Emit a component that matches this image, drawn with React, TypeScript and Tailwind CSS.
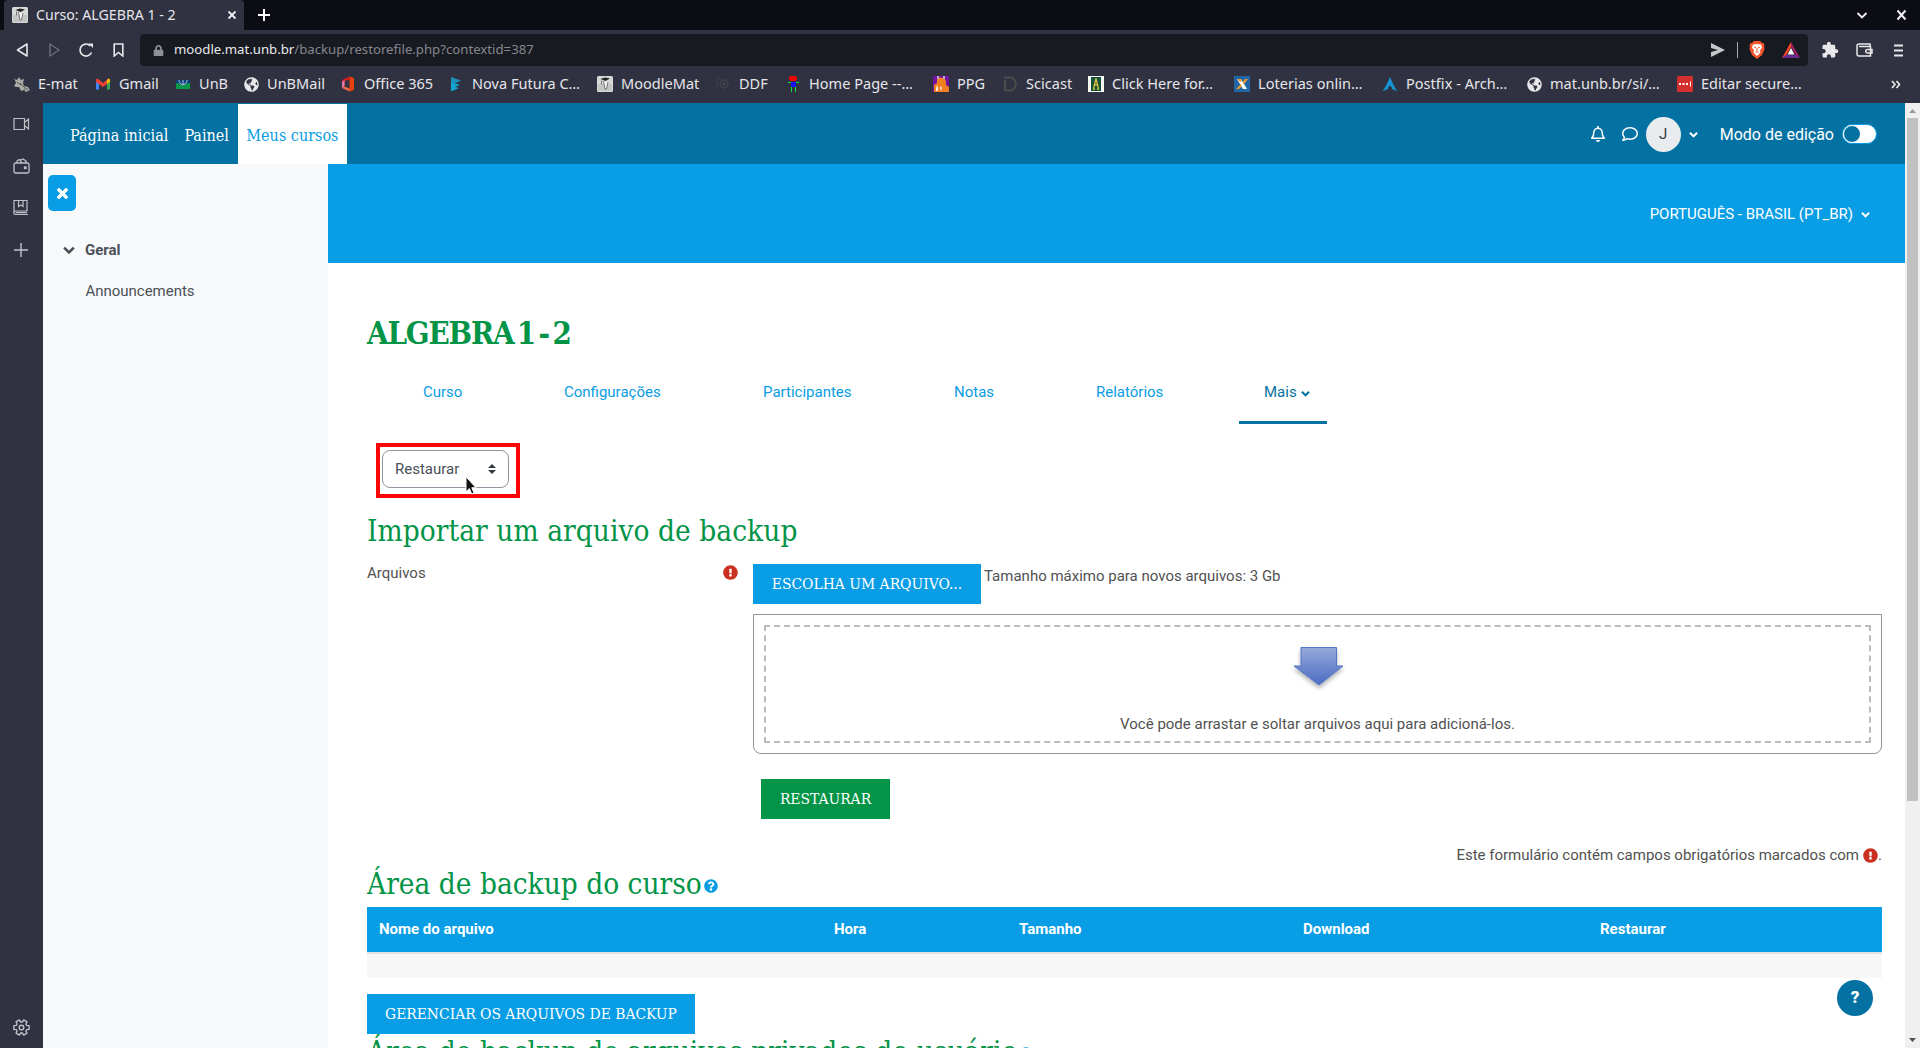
import type { ReactNode } from "react";
import { FaTimes, FaRegBell, FaRegComment, FaExclamationCircle, FaQuestionCircle, FaGlobeAmericas, FaLock } from "react-icons/fa";
import { MdExtension } from "react-icons/md";

function Chevron({ size, className }: { size: number; className?: string }) {
  return (
    <svg className={className} width={size} height={size} viewBox="0 0 10 10" fill="none" stroke="currentColor" strokeWidth="2.200">
      <path d="M1 3l4 4 4-4" />
    </svg>
  );
}

function MoodleIcon() {
  return (
    <svg width="16" height="16" viewBox="0 0 16 16">
      <rect width="16" height="16" rx="1.5" fill="#d8d8d8" />
      <rect x="1" y="8" width="14" height="7" fill="#c4c4c4" />
      <path d="M3.500 3 8 1.500l5 1-4.500 2.500z" fill="#222" />
      <path d="M4.500 4.500v4M6.500 5l1.500 8h1.500l1.500-7" fill="#f4f4f4" stroke="#6a6a6a" strokeWidth=".9" />
    </svg>
  );
}

function GlobeIcon() {
  return <FaGlobeAmericas size={15} color="#e8e8ea" />;
}

const box = "0 0 16 16";

const bookmarks: { label: string; width: string; icon: ReactNode }[] = [
  {
    label: "E-mat", width: "w-[81px]",
    icon: (
      <svg width="16" height="16" viewBox={box}>
        <path d="M0 2l2 2 2-1 1-2 2 3 3-1-1 4 1 3 4 1 2 3-4 2-2-2-3 1-2-4-3 0-2-1 2-3z" fill="#aaa9a4" />
        <path d="M6 7l5 5M3 6l4 3M10 13l4 0" stroke="#5c5a56" strokeWidth="1" fill="none" />
      </svg>
    ),
  },
  {
    label: "Gmail", width: "w-[80px]",
    icon: (
      <svg width="16" height="16" viewBox={box}>
        <path d="M1 5v8.500h3V7z" fill="#4285f4" />
        <path d="M15 5v8.500h-3V7z" fill="#34a853" />
        <path d="M1 3.500 2.500 2.500 8 7l5.500-4.500L15 3.500V6l-7 5-7-5z" fill="#ea4335" />
        <path d="M12 4l1.500-1.500L15 3.500V6l-3 2z" fill="#fbbc04" />
      </svg>
    ),
  },
  {
    label: "UnB", width: "w-[68px]",
    icon: (
      <svg width="16" height="16" viewBox={box}>
        <path d="M1 4h14v3l-7 3-7-3z" fill="#0b3f7e" />
        <path d="M1 7c2 0 5 1 7 3 2-2 5-3 7-3v6H1z" fill="#0a9a4a" />
        <path d="M8 4v5M4 4c0 2 1 4 4 5 3-1 4-3 4-5" stroke="#dfe9f0" strokeWidth=".8" fill="none" />
      </svg>
    ),
  },
  { label: "UnBMail", width: "w-[97px]", icon: <GlobeIcon /> },
  {
    label: "Office 365", width: "w-[108px]",
    icon: (
      <svg width="16" height="16" viewBox={box}>
        <path d="M9.500.500 14 2v12l-4.500 1.500z" fill="#e8400c" />
        <path d="M9.500.500 2 4v8l2.500-1.500V5l5-1.500z" fill="#d81e1e" />
        <path d="M2 12l2.500-1.500 5 2v3z" fill="#f2664b" />
        <path d="M2 6l2.500-2v6L2 12z" fill="#e07db0" />
      </svg>
    ),
  },
  {
    label: "Nova Futura C…", width: "w-[149px]",
    icon: (
      <svg width="16" height="16" viewBox={box}>
        <path d="M3 1l10 3.500L8 7H3z" fill="#1d91b8" />
        <path d="M3 6l9 3-5 2H3zM3 10l8 2-8 3.500z" fill="#11a6cf" />
      </svg>
    ),
  },
  { label: "MoodleMat", width: "w-[118px]", icon: <MoodleIcon /> },
  {
    label: "DDF", width: "w-[70px]",
    icon: (
      <svg width="16" height="16" viewBox={box} fill="none" stroke="#454549">
        <path d="M2 4v8M3 3h3" />
        <circle cx="9" cy="8" r="4" strokeWidth="1.300" />
        <path d="M7.500 7l1.500 2.500 2-2.500z" fill="#454549" />
      </svg>
    ),
  },
  {
    label: "Home Page --…", width: "w-[148px]",
    icon: (
      <svg width="16" height="16" viewBox={box} shapeRendering="crispEdges">
        <path d="M5 0h6v1h1v3h-1v1H5V4H4V1h1z" fill="#f00606" />
        <path d="M6 6h5v5H6z" fill="#1414f0" />
        <path d="M3 6h3v1H3zM11 6h3v1h-3zM6 11h1v5H6zM10 11h1v5h-1z" fill="#08e83c" />
      </svg>
    ),
  },
  {
    label: "PPG", width: "w-[69px]",
    icon: (
      <svg width="16" height="16" viewBox={box}>
        <path d="M0 0h16v16H0z" fill="#7711a0" />
        <path d="M1 16V9l3-2V3l3-1.500 4 .5 2 3v4l3 2v5z" fill="#f07f22" />
        <path d="M4 0h2v3H4zM10 0h2v3h-2z" fill="#b9a9c9" />
        <path d="M3 12l1-3 1 3v3H3zM7 12l1-2 1 2-1 3z" fill="#fbe8dc" />
      </svg>
    ),
  },
  {
    label: "Scicast", width: "w-[86px]",
    icon: (
      <svg width="16" height="16" viewBox={box} fill="none" stroke="#4d4d4d" strokeWidth="2">
        <path d="M2 1.500h5C16 1.500 16 14.500 7 14.500H3V4" />
      </svg>
    ),
  },
  {
    label: "Click Here for…", width: "w-[146px]",
    icon: (
      <svg width="16" height="16" viewBox={box}>
        <path d="M0 0h16v16H0z" fill="#f8f8f2" />
        <path d="M3 1h10v14H3z" fill="#14513b" />
        <path d="M8 2.500 5.500 13M8 2.500 10.500 13M6 9h4M5 13h2M9 13h2" stroke="#d9bd3c" strokeWidth="1.300" fill="none" />
      </svg>
    ),
  },
  {
    label: "Loterias onlin…", width: "w-[148px]",
    icon: (
      <svg width="16" height="16" viewBox={box}>
        <path d="M0 0h16v16H0z" fill="#2267a5" />
        <path d="M3 3h4l6 10H9z" fill="#fff" />
        <path d="M11 3h3l-4 5-1.500-1.500zM2 13h3l3-3-1-2z" fill="#f49a2a" />
        <path d="M3 3h4l1 2-2 1z" fill="#f49a2a" />
      </svg>
    ),
  },
  {
    label: "Postfix - Arch…", width: "w-[144px]",
    icon: (
      <svg width="16" height="16" viewBox={box}>
        <path d="M8 .5C7.300 3 4 10 .5 15.500c2-1 4-2 5.500-2.200 0-1.800.7-3.300 2-3.300s2 1.500 2 3.300c1.500.2 3.500 1.200 5.500 2.200C12 10 8.700 3 8 .5z" fill="#1793d1" />
      </svg>
    ),
  },
  { label: "mat.unb.br/si/…", width: "w-[151px]", icon: <GlobeIcon /> },
  {
    label: "Editar secure…", width: "w-[140px]",
    icon: (
      <svg width="16" height="16" viewBox={box}>
        <rect width="16" height="16" rx="1.500" fill="#d32f2f" />
        <path d="M2 7h2v2H2zM5.500 7h2v2h-2zM9 7h2v2H9zM13 5.500h1v5h-1z" fill="#fff" />
      </svg>
    ),
  },
];

function TabStrip() {
  return (
    <div className="flex h-[30px] items-center justify-between bg-[#0b0c14]">
      <div className="flex h-full items-center">
        <div className="ml-1 flex h-full w-60 items-center rounded-t bg-[#303241] pr-[7px] pl-2">
          <MoodleIcon />
          <span className="ml-2 flex-1 text-[14.2px] tracking-[-0.02px] text-[#e6e6ea]">Curso: ALGEBRA 1 - 2</span>
          <svg width="10" height="10" viewBox="0 0 10 10" stroke="#f0f0f2" strokeWidth="1.800">
            <path d="M1.500 1.500l7 7M8.500 1.500l-7 7" />
          </svg>
        </div>
        <svg className="ml-[13px]" width="14" height="14" viewBox="0 0 14 14" stroke="#fff" strokeWidth="2">
          <path d="M7 1v12M1 7h12" />
        </svg>
      </div>
      <div className="flex items-center gap-[28px] pr-[13px]">
        <svg width="12" height="12" viewBox="0 0 12 12" fill="none" stroke="#f0f0f2" strokeWidth="1.800">
          <path d="M1.500 4l4.500 4.500L10.500 4" />
        </svg>
        <svg width="11" height="12" viewBox="0 0 11 12" stroke="#f0f0f2" strokeWidth="2">
          <path d="M1.500 1.500l8 9M9.500 1.500l-8 9" />
        </svg>
      </div>
    </div>
  );
}

function AddressRow() {
  return (
    <div className="flex h-10 items-center">
      <div className="flex w-[140px] items-center pl-4 text-[#e8e8ea]">
        <svg width="13" height="14" viewBox="0 0 13 14" fill="none" stroke="currentColor" strokeWidth="1.600" strokeLinejoin="round">
          <path d="M11 1v12L1.500 7z" />
        </svg>
        <svg className="ml-[19px]" width="13" height="14" viewBox="0 0 13 14" fill="none" stroke="#6a6c78" strokeWidth="1.500" strokeLinejoin="round">
          <path d="M2 1v12L11 7z" />
        </svg>
        <svg className="ml-[17px]" width="16" height="16" viewBox="0 0 16 16" fill="none" stroke="currentColor" strokeWidth="1.700">
          <path d="M13.500 10.500A6 6 0 1 1 12.300 3.800" />
          <path d="M10.500 1.500h4.500v4.500z" fill="currentColor" stroke="none" />
        </svg>
        <svg className="ml-[19px]" width="11" height="14" viewBox="0 0 11 14" fill="none" stroke="currentColor" strokeWidth="1.600">
          <path d="M1.200 1h8.600v12L5.500 9.500 1.200 13z" />
        </svg>
      </div>
      <div className="flex h-8 w-[1668px] items-center rounded bg-[#181a21] pr-[8px] pl-[13px]">
        <FaLock size={11} color="#8e9097" />
        <span className="ml-[10px] flex-1 text-[13.2px] text-[#85878e]">
          <span className="text-[#e9e9ec]">moodle.mat.unb.br</span>/backup/restorefile.php?contextid=387
        </span>
        <svg width="16" height="14" viewBox="0 0 16 14" fill="#c6c7cb">
          <path d="M1 0l14 7-14 7V9l7-2-7-2z" />
        </svg>
        <div className="ml-[11px] h-4 w-px bg-[#a9aab0]" />
        <svg className="ml-[11px]" width="16" height="18" viewBox="0 0 16 18">
          <path d="M5 0h6l2 2h1.500l1 2.500-.5 1.500.5 2-2.500 6L8 18l-5-4L.500 8 1 6 .5 4.500l1-2.500H3z" fill="#fb542b" />
          <path d="M8 3l4 .5 1 3-2 3 .5 2L8 15l-3.500-3.500.5-2-2-3 1-3z" fill="#fff" />
          <path d="M5 6l2 .8M11 6l-2 .8M8 7v3M6.500 11.500L8 10.500l1.500 1" stroke="#fb542b" fill="none" />
        </svg>
        <svg className="ml-[17px]" width="18" height="16" viewBox="0 0 18 16">
          <path d="M9 0L0 16l4-2.500L9 5z" fill="#ff4724" />
          <path d="M9 0l9 16-4-2.500L9 5z" fill="#9e1f63" />
          <path d="M0 16h18l-4-3H4z" fill="#662d91" />
          <path d="M9 6l-3.500 6.500h7z" fill="#fff" />
        </svg>
      </div>
      <div className="flex items-center text-[#e8e8ea]">
        <MdExtension className="ml-[13px]" size={18} />
        <svg className="ml-[17px]" width="17" height="14" viewBox="0 0 17 14" fill="none" stroke="currentColor" strokeWidth="1.500">
          <path d="M14 3.500V1H3a2 2 0 0 0-2 2v8a2 2 0 0 0 2 2h11.500V3.500H3" />
          <path d="M16 6.500h-4.500a1.800 1.800 0 0 0 0 3.600H16z" />
        </svg>
        <svg className="ml-[21px]" width="9" height="13" viewBox="0 0 9 13" stroke="currentColor" strokeWidth="1.800">
          <path d="M0 1.500h9M0 6.500h9M0 11.500h9" />
        </svg>
      </div>
    </div>
  );
}

function BookmarkBar() {
  return (
    <div className="flex h-[33px] items-center pb-[5px] pl-[14px] text-[14.500px] text-[#e6e6ea]">
      {bookmarks.map((b) => (
        <div key={b.label} className={`flex shrink-0 items-center gap-2 whitespace-nowrap ${b.width}`}>
          <span className="flex w-4 shrink-0 justify-center">{b.icon}</span>
          <span className="tracking-[0.030px]">{b.label}</span>
        </div>
      ))}
      <svg className="ml-[74px]" width="10" height="9" viewBox="0 0 10 9" fill="none" stroke="currentColor" strokeWidth="1.700">
        <path d="M1 1l3 3.500L1 8M5.500 1l3 3.500-3 3.500" />
      </svg>
    </div>
  );
}

function BrowserRail() {
  return (
    <aside className="flex w-[43px] shrink-0 flex-col items-center bg-[#303241] pr-[1px] pb-[12px] text-[#c0c1c8]">
      <svg className="mt-[14px]" width="17" height="14" viewBox="0 0 17 14" fill="none" stroke="currentColor" strokeWidth="1.200">
        <path d="M1 1.500h10.500v11H1zM11.500 5.500l4-3.500v10l-4-3.500" />
      </svg>
      <svg className="mt-[27px]" width="17" height="16" viewBox="0 0 17 16" fill="none" stroke="currentColor" strokeWidth="1.300">
        <rect x="1" y="5" width="15" height="10" rx="1.500" />
        <path d="M4 5V3l2-1.500 2 1.500v2M7 2l3-1 3 2v2" />
        <rect x="11.500" y="9" width="1.500" height="1.500" fill="currentColor" />
      </svg>
      <svg className="mt-[25px]" width="16" height="17" viewBox="0 0 16 17" fill="none" stroke="currentColor" strokeWidth="1.200">
        <path d="M1 13V1.500h13V12H2.500a1.500 1.500 0 0 0 0 3.500H15M5.500 1.500v6L7.700 6l2.300 1.500v-6M2.500 13.700H14" />
      </svg>
      <svg className="mt-[27px]" width="14" height="14" viewBox="0 0 14 14" stroke="currentColor" strokeWidth="1.400">
        <path d="M7 0v14M0 7h14" />
      </svg>
      <svg className="mt-auto" width="17" height="17" viewBox="-8.500 -8.500 17 17" fill="none" stroke="currentColor" strokeWidth="1.400" strokeLinejoin="round">
        <path d="M7.600-1.900V1.900L5.200 2.100 4.400 3.500 5.500 5.700 2.200 7.600.8 5.500H-.8L-2.200 7.600-5.500 5.700-4.400 3.500-5.200 2.100-7.600 1.900V-1.900L-5.200-2.100-4.400-3.500-5.500-5.700-2.200-7.600-.8-5.500H.8L2.200-7.600 5.500-5.700 4.400-3.500 5.200-2.100z" />
        <circle r="2.300" />
      </svg>
    </aside>
  );
}

function SiteHeader() {
  return (
    <header className="flex h-[61px] items-center bg-[#0471a3] pt-px text-white">
      <nav className="flex h-full items-center font-['DejaVu_Serif_Condensed','DejaVu_Serif',serif] text-base">
        <a className="ml-[27px] pt-1 tracking-[0.02px]">Página inicial</a>
        <a className="ml-4 pt-1">Painel</a>
        <a className="ml-[9px] flex h-full w-[109px] items-center justify-center bg-white pt-1 text-[#089de4]">Meus cursos</a>
      </nav>
      <div className="ml-auto flex items-center pr-[28px]">
        <FaRegBell size={16} />
        <FaRegComment className="ml-4" size={16} />
        <div className="ml-[8px] flex size-[35px] items-center justify-center rounded-full bg-[#e9ecef] pt-px text-[15px] text-[#343a40]">J</div>
        <Chevron className="ml-[8px]" size={9} />
        <span className="ml-[22px] pt-px text-base">Modo de edição</span>
        <span className="ml-2 flex h-5 w-[35px] rounded-full border border-[#089de4] bg-white">
          <span className="size-[18px] rounded-full border border-white bg-[#0471a3]" />
        </span>
      </div>
    </header>
  );
}

function CourseDrawer() {
  return (
    <aside className="flex w-[285px] shrink-0 flex-col items-start bg-[#f8f9fb] text-[15px] text-[#495057]">
      <button className="mt-[11px] ml-[5px] flex h-9 w-7 items-center justify-center rounded-[5px] bg-[#089de4] text-white">
        <FaTimes size={15} stroke="currentColor" strokeWidth="30" />
      </button>
      <div className="mt-[28px] flex items-center font-bold">
        <Chevron className="mr-[10px] ml-[20px]" size={12} />
        Geral
      </div>
      <a className="mt-[18px] ml-[42.500px] tracking-[-0.02px]">Announcements</a>
    </aside>
  );
}

function SecondaryNav() {
  return (
    <nav className="mt-[14px] flex h-[57px] text-[15px] text-[#089de4]">
      <a className="ml-[56px] w-[141px] pt-[14px]">Curso</a>
      <a className="w-[199px] pt-[14px]">Configurações</a>
      <a className="w-[191px] pt-[14px]">Participantes</a>
      <a className="w-[142px] pt-[14px]">Notas</a>
      <a className="w-[143px] pt-[14px]">Relatórios</a>
      <a className="flex w-[88px] items-start justify-start border-b-3 border-[#0471a3] pt-[14px] pl-[25px] text-[#0471a3]">
        Mais
        <Chevron className="mt-[8px] ml-1" size={9} />
      </a>
    </nav>
  );
}

function SelectHighlight() {
  return (
    <div className="relative mt-[19px] ml-[9px] h-[55px] w-[144px] border-4 border-[#fb0606] pt-[3px] pl-[2px]">
      <div className="flex h-[38px] w-[127px] items-center justify-between rounded-lg border border-[#8f959e] pr-[12px] pl-[12px] text-[15px] text-[#495057]">
        Restaurar
        <svg width="8" height="10" viewBox="0 0 8 10" fill="#343a40">
          <path d="M4 0l4 4H0zM4 10l4-4H0z" />
        </svg>
      </div>
      <svg className="absolute top-[29px] left-[85px]" width="12" height="19" viewBox="0 0 12 19">
        <path d="M1 .8v15l3.400-3.200 2.300 5.400 2.400-1-2.300-5.300H11z" fill="#111" stroke="#fff" strokeWidth="1" />
      </svg>
    </div>
  );
}

const heading = "font-['DejaVu_Serif_Condensed','DejaVu_Serif',serif] text-[29.500px] leading-9 text-[#039447]";
const slabButton = "flex h-10 items-center justify-center pt-[2px] font-['DejaVu_Serif_Condensed','DejaVu_Serif',serif] text-[15.450px] text-white";

function DropZone() {
  return (
    <div className="mt-[10px] h-[140px] rounded-b-lg border border-[#8f959e] px-[10px] py-[10px]">
      <div className="flex h-[118px] flex-col items-center border-2 border-dashed border-[#bbb]">
        <svg className="mt-[16px]" width="56" height="50" viewBox="0 0 56 50">
          <defs>
            <linearGradient id="arrowFill" x1="0" y1="0" x2="0" y2="1">
              <stop offset="0" stopColor="#96a8da" />
              <stop offset="1" stopColor="#4c6dc2" />
            </linearGradient>
            <filter id="arrowShadow" x="-20%" y="-20%" width="140%" height="150%">
              <feDropShadow dx="0" dy="3" stdDeviation="2" floodColor="#000" floodOpacity=".3" />
            </filter>
          </defs>
          <path d="M11 4.500h35.500v18.500H53L29 42 4 23h7z" fill="url(#arrowFill)" stroke="#5474c6" strokeWidth="1" filter="url(#arrowShadow)" />
        </svg>
        <span className="mt-[20px]">Você pode arrastar e soltar arquivos aqui para adicioná-los.</span>
      </div>
    </div>
  );
}

function RestoreForm() {
  return (
    <form className="text-[15px] text-[#515151]">
      <div className="mt-[15px] flex">
        <div className="flex w-[386px] items-start justify-between pr-[15px] leading-[18px]">
          Arquivos
          <FaExclamationCircle className="mt-px" size={15} color="#ca3120" />
        </div>
        <div className="flex-1">
          <div className="flex items-start">
            <button type="button" className={`${slabButton} w-[228px] bg-[#089de4]`}>ESCOLHA UM ARQUIVO...</button>
            <span className="ml-[3px] pt-px">Tamanho máximo para novos arquivos: 3 Gb</span>
          </div>
          <DropZone />
          <button type="button" className={`${slabButton} mt-[25px] ml-2 w-[129px] bg-[#039447]`}>
            RESTAURAR
          </button>
        </div>
      </div>
      <div className="mt-[25px] flex items-center justify-end">
        Este formulário contém campos obrigatórios marcados com
        <FaExclamationCircle className="ml-1" size={15} color="#ca3120" />.
      </div>
    </form>
  );
}

function BackupArea() {
  return (
    <section className="-mt-px text-[15px]">
      <h3 className={`${heading} flex items-center`}>
        Área de backup do curso
        <FaQuestionCircle className="mt-[4px] ml-[2px]" size={14} color="#089de4" />
      </h3>
      <div className="mt-[5px] flex h-[45px] items-center bg-[#089de4] pl-3 font-bold text-white">
        <span className="w-[455px]">Nome do arquivo</span>
        <span className="w-[185px]">Hora</span>
        <span className="w-[284px]">Tamanho</span>
        <span className="w-[297px]">Download</span>
        <span>Restaurar</span>
      </div>
      <div className="h-[26px] border-t-2 border-[#dee2e6] bg-[#f7f7f7]" />
      <button className={`${slabButton} mt-4 w-[328px] bg-[#089de4]`}>GERENCIAR OS ARQUIVOS DE BACKUP</button>
      <h3 className={`${heading} flex items-center whitespace-nowrap`}>
        Área de backup de arquivos privados do usuário
        <FaQuestionCircle className="mt-[4px] ml-[2px]" size={14} color="#089de4" />
      </h3>
    </section>
  );
}

function Scrollbar() {
  return (
    <div className="flex w-[15px] shrink-0 flex-col items-center bg-[#f0f0f0]">
      <svg className="mt-[6px]" width="7" height="4" viewBox="0 0 7 4" fill="#9a9a9a">
        <path d="M3.500 0L7 4H0z" />
      </svg>
      <div className="mt-[5px] h-[683px] w-[11px] bg-[#c1c1c1]" />
      <svg className="mt-auto mb-[6px]" width="7" height="4" viewBox="0 0 7 4" fill="#505050">
        <path d="M3.500 4L7 0H0z" />
      </svg>
    </div>
  );
}

export default function App() {
  return (
    <div className="flex h-[1048px] w-[1920px] flex-col overflow-hidden bg-white font-[Roboto,sans-serif]">
      <div className="h-[103px] shrink-0 bg-[#303241] font-['Noto_Sans',sans-serif]">
        <TabStrip />
        <AddressRow />
        <BookmarkBar />
      </div>
      <div className="flex h-[945px]">
        <BrowserRail />
        <div className="relative flex min-w-0 flex-1 flex-col overflow-hidden">
          <SiteHeader />
          <div className="flex h-[884px]">
            <CourseDrawer />
            <main className="min-w-0 flex-1">
              <div className="flex h-[99px] items-center justify-end bg-[#089de4] pt-px pr-[35px] text-[15px] text-white">
                PORTUGUÊS - BRASIL (PT_BR)
                <Chevron className="ml-2" size={9} />
              </div>
              <div className="pr-[23px] pl-[39px]">
                <h1 className="mt-[50px] font-['DejaVu_Serif_Condensed','DejaVu_Serif',serif] text-[31px] leading-10 font-bold tracking-[-1.200px] [word-spacing:-5px] text-[#039447]">
                  ALGEBRA 1 - 2
                </h1>
                <SecondaryNav />
                <SelectHighlight />
                <h2 className={`${heading} mt-[15px] tracking-[0.05px]`}>Importar um arquivo de backup</h2>
                <RestoreForm />
                <BackupArea />
              </div>
            </main>
          </div>
          <button className="absolute right-[32px] bottom-[32px] flex size-9 items-center justify-center rounded-full bg-[#0471a3] text-[17px] font-black text-white">
            ?
          </button>
        </div>
        <Scrollbar />
      </div>
    </div>
  );
}
